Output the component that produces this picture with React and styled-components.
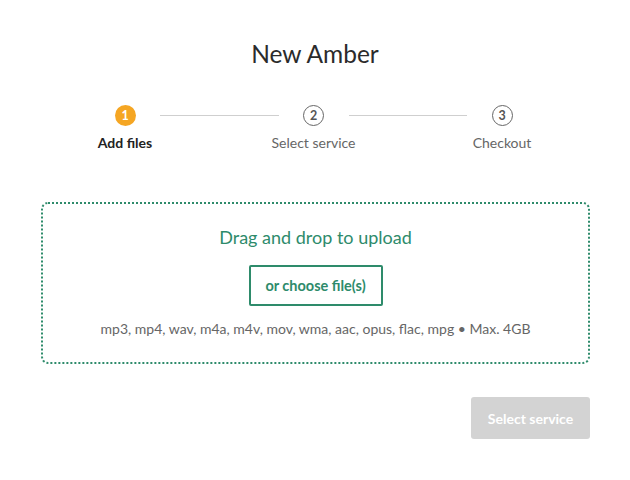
import React from "react";
import styled, { createGlobalStyle } from "styled-components";

const Global = createGlobalStyle`
  html, body { margin: 0; padding: 0; background: #fff; }
  body { font-family: "Lato", "Noto Sans", "Liberation Sans", sans-serif; color: #333; }
  * { box-sizing: border-box; }
`;

const Page = styled.div`
  width: 630px;
  height: 480px;
  padding: 38px 40px 0 40px;
  display: flex;
  flex-direction: column;
`;

const Title = styled.h1`
  margin: 0;
  text-align: center;
  font-size: 24.5px;
  font-weight: 400;
  color: #2b2b2b;
  line-height: 31px;
`;

const Stepper = styled.div`
  display: flex;
  align-items: flex-start;
  margin-top: 36px;
  padding: 0 53px 0 50px;
`;

const Step = styled.div`
  width: 70px;
  display: flex;
  flex-direction: column;
  align-items: center;
  flex-shrink: 0;
`;

const Circle = styled.div`
  width: 21px;
  height: 21px;
  border-radius: 50%;
  display: flex;
  align-items: center;
  justify-content: center;
  font-size: 12.5px;
  font-weight: 700;
  background: ${(p) => (p.$active ? "#f5a623" : "#fff")};
  color: ${(p) => (p.$active ? "#fff" : "#555")};
  border: ${(p) => (p.$active ? "none" : "1.5px solid #666")};
`;

const Label = styled.div`
  margin-top: 8px;
  white-space: nowrap;
  font-size: 14px;
  font-weight: ${(p) => (p.$active ? 700 : 400)};
  color: ${(p) => (p.$active ? "#222" : "#666")};
`;

const Line = styled.div`
  flex: 1;
  height: 1px;
  background: #cfcfcf;
  margin-top: 10px;
`;

const Dropzone = styled.div`
  margin-top: 51px;
  margin-left: 1px;
  height: 162px;
  border: 2px dotted #2e8b6b;
  border-radius: 7px;
  display: flex;
  flex-direction: column;
  align-items: center;
  padding-top: 22px;
`;

const DropTitle = styled.div`
  font-size: 18px;
  color: #2e8b6b;
  line-height: 22px;
`;

const ChooseButton = styled.button`
  margin-top: 17px;
  width: 134px;
  height: 41px;
  background: #fff;
  border: 2px solid #2e8b6b;
  border-radius: 2px;
  color: #2e8b6b;
  font-family: inherit;
  font-size: 14.5px;
  font-weight: 700;
`;

const Formats = styled.div`
  margin-top: 14px;
  font-size: 14px;
  color: #666;
`;

const Footer = styled.div`
  display: flex;
  justify-content: flex-end;
  margin-top: 33px;
`;

const NextButton = styled.button`
  width: 119px;
  height: 42px;
  background: #d3d3d3;
  border: none;
  border-radius: 3px;
  color: #fff;
  font-family: inherit;
  font-size: 14px;
  font-weight: 700;
`;

const steps = ["Add files", "Select service", "Checkout"];

export default function App() {
  return (
    <>
      <Global />
      <Page>
        <Title>New Amber</Title>
        <Stepper>
          {steps.map((s, i) => (
            <React.Fragment key={s}>
              {i > 0 && <Line />}
              <Step>
                <Circle $active={i === 0}>{i + 1}</Circle>
                <Label $active={i === 0}>{s}</Label>
              </Step>
            </React.Fragment>
          ))}
        </Stepper>
        <Dropzone>
          <DropTitle>Drag and drop to upload</DropTitle>
          <ChooseButton>or choose file(s)</ChooseButton>
          <Formats>mp3, mp4, wav, m4a, m4v, mov, wma, aac, opus, flac, mpg • Max. 4GB</Formats>
        </Dropzone>
        <Footer>
          <NextButton>Select service</NextButton>
        </Footer>
      </Page>
    </>
  );
}
